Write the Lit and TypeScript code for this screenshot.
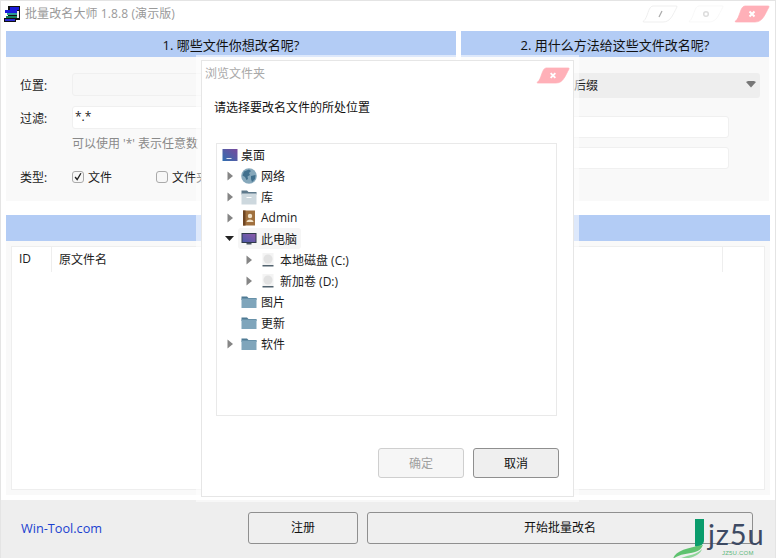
import { LitElement, html, css, svg } from "lit";
import { customElement } from "lit/decorators.js";

const arrowR = html`<svg class="arrow" width="7" height="10" viewBox="0 0 7 10"><polygon points="0.5,0.5 6,5 0.5,9.5" fill="#858585"/></svg>`;
const arrowD = html`<svg class="arrow down" width="9" height="5" viewBox="0 0 9 5"><polygon points="0,0 9,0 4.5,5" fill="#222"/></svg>`;

const icons: Record<string, unknown> = {
  desktop: html`<svg class="ico" viewBox="0 0 16 14"><defs><linearGradient id="dg" x1="0" y1="1" x2="1" y2="0"><stop offset="0" stop-color="#2f6fb0"/><stop offset="1" stop-color="#7a4a9c"/></linearGradient></defs><rect x="0.5" y="1" width="15" height="12" fill="url(#dg)"/><rect x="4.5" y="10" width="5" height="1" fill="#dfe6f0"/></svg>`,
  globe: html`<svg class="ico" viewBox="0 0 16 16"><circle cx="8" cy="8" r="7.8" fill="#86a8bb"/><path d="M3 3.5 L8 1.5 L10 3 L8 5 L9 7 L6.5 8.5 L7 11 L5.5 12 L4 9 L1.5 7.5 Z M10 8 L14.5 7 L14 11 L11 14 L10 11 Z" fill="#41708d"/></svg>`,
  lib: html`<svg class="ico" viewBox="0 0 16 16"><path d="M0.5 1.5 H6 L7.5 3 H15.5 V5.5 H0.5 Z" fill="#5f7a8c"/><rect x="0.5" y="4.5" width="15" height="11" fill="#cdd8de"/><rect x="5.5" y="8" width="5" height="1" fill="#fff"/></svg>`,
  admin: html`<svg class="ico" viewBox="0 0 16 16"><rect x="2" y="0.5" width="12" height="15" fill="#a0703e"/><rect x="2" y="0.5" width="2.5" height="15" fill="#6e4522"/><circle cx="9" cy="6" r="2.2" fill="#f1e2c8"/><path d="M5.5 12 C5.5 8.5 12.5 8.5 12.5 12 Z" fill="#f1e2c8"/></svg>`,
  pc: html`<svg class="ico" viewBox="0 0 16 14"><defs><linearGradient id="pg" x1="0" y1="1" x2="1" y2="0"><stop offset="0" stop-color="#4a58a8"/><stop offset="1" stop-color="#8d5aa8"/></linearGradient></defs><rect x="0.5" y="1" width="15" height="10" fill="#2f3a4a"/><rect x="1.5" y="2" width="13" height="8" fill="url(#pg)"/><rect x="5.5" y="11" width="5" height="1.5" fill="#4a5666"/></svg>`,
  disk: html`<svg class="ico" viewBox="0 0 16 16"><rect x="2.5" y="1" width="11" height="12" fill="#f4f4f4"/><circle cx="8" cy="7" r="4.5" fill="#e2e2e2"/><rect x="2.5" y="13" width="11" height="1.5" fill="#52636f"/></svg>`,
  folder: html`<svg class="ico" viewBox="0 0 16 14"><path d="M0.5 1.5 H6 L7.5 3 H15.5 V5 H0.5 Z" fill="#4f7a94"/><rect x="0.5" y="3.5" width="15" height="9.5" fill="#7fa5bb"/></svg>`,
};

const tree: { lvl: number; arrow?: "r" | "d"; icon: string; label: string; sel?: boolean }[] = [
  { lvl: 0, icon: "desktop", label: "桌面" },
  { lvl: 1, arrow: "r", icon: "globe", label: "网络" },
  { lvl: 1, arrow: "r", icon: "lib", label: "库" },
  { lvl: 1, arrow: "r", icon: "admin", label: "Admin" },
  { lvl: 1, arrow: "d", icon: "pc", label: "此电脑", sel: true },
  { lvl: 2, arrow: "r", icon: "disk", label: "本地磁盘 (C:)" },
  { lvl: 2, arrow: "r", icon: "disk", label: "新加卷 (D:)" },
  { lvl: 1, icon: "folder", label: "图片" },
  { lvl: 1, icon: "folder", label: "更新" },
  { lvl: 1, arrow: "r", icon: "folder", label: "软件" },
];

const winBtn = (fill: string, stroke: string, mark: unknown) => html`<svg class="wbtn" viewBox="0 0 36 18">
  <path d="M11 1 H34 Q35.5 1 35 2 C31 9 29 17 21 17 H2 Q0.5 17 1.5 16 C6 13 6 1 11 1 Z" fill="${fill}" stroke="${stroke}" stroke-width="0.7"/>${mark}</svg>`;
const closeMark = svg`<path d="M15.5 6.5 L20.5 11.5 M20.5 6.5 L15.5 11.5" stroke="#fff" stroke-width="2"/>`;

@customElement("app-root")
export class AppRoot extends LitElement {
  static styles = css`
    :host { display: block; width: 776px; height: 558px; font-family: "Open Sans", "Noto Sans CJK SC", sans-serif; font-size: 12px; color: #1c1c1c; }
    * { box-sizing: border-box; }
    .win { position: relative; width: 776px; height: 558px; background: #fff; border: 1px solid #e4e4e4; border-bottom: 0; display: flex; flex-direction: column; overflow: hidden; }
    .titlebar { height: 30px; flex: none; display: flex; align-items: center; padding: 0 5px 5px 3px; gap: 5px; color: #9a9a9a; }
    .titlebar .title { flex: 1; letter-spacing: 0.1px; margin-top: -2px; }
    .wbtns { display: flex; gap: 10px; align-items: center; }
    .wbtn { width: 36px; height: 18px; display: block; }
    .content { padding: 0 5px; flex: 1; display: flex; flex-direction: column; }
    .cols { display: grid; grid-template-columns: 450px 308px; column-gap: 5px; }
    .head { height: 26px; background: #b3ccf5; display: flex; align-items: center; justify-content: center; font-size: 13px; color: #111; }
    .panel { height: 144px; background: #f9f9f9; padding: 16px 0 0 14px; }
    .form { display: grid; grid-template-columns: 52px 1fr; row-gap: 10px; align-items: center; }
    .lbl { padding-top: 1px; }
    .lbl.t { margin-top: 5px; padding-top: 0; }
    .field { height: 23px; background: #fff; border: 1px solid #f0f0f0; border-radius: 3px; padding: 0 2px 2px; display: flex; align-items: center; }
    .field.off { background: #f8f8f8; }
    .hint { color: #8a8a8a; margin-top: -4px; height: 18px; line-height: 18px; white-space: nowrap; }
    .types { display: flex; margin-top: 5px; }
    .check { display: flex; align-items: center; gap: 4px; width: 84px; }
    .box { width: 12px; height: 12px; border: 1px solid #aaa; border-radius: 3px; background: #f7f7f7; display: block; flex: none; }
    .panel.right { position: relative; padding: 16px 9px 0 49px; }
    .select { height: 25px; background: #eee; border-radius: 3px; display: flex; align-items: center; padding: 0 4px 2px 64px; justify-content: space-between; }
    .rfields { display: flex; flex-direction: column; gap: 9px; margin: 18px 31px 0 0; }
    .rfields .field { height: 22px; }
    .gap { height: 14px; flex: none; }
    .listpanel { flex: 1; background: #f9f9f9; padding: 5px 5px 5px; display: flex; }
    .table { flex: 1; background: #fff; border: 1px solid #eee; }
    .thead { height: 25px; display: grid; grid-template-columns: 40px 1fr 41px; align-items: stretch; }
    .th { display: flex; align-items: center; padding: 0 0 2px 7px; border-right: 1px solid #eee; }
    .th:last-child { border-right: 0; }
    .bottom { height: 58px; flex: none; margin-top: 5px; background: #eeeeee; display: flex; align-items: center; padding: 0 22px 3px 20px; }
    .link { color: #1a3fd0; font-size: 12.7px; width: 227px; font-family: "Open Sans", sans-serif; }
    .btn { height: 32px; background: #efefef; border: 1px solid #8f8f8f; border-bottom-width: 1.5px; border-radius: 3px; display: flex; align-items: center; justify-content: center; color: #111; padding-bottom: 1px; }
    .b1 { width: 110px; margin-right: 9px; }
    .b2 { width: 386px; }
    .mark { position: absolute; left: 672px; top: 515px; width: 100px; height: 43px; pointer-events: none; }
    .mark svg { position: absolute; left: 0; top: 0; }
    .mark .jz { position: absolute; left: 35px; top: -1px; font: 400 29px/38px "Lato", sans-serif; color: #3d4a63; letter-spacing: 0.9px; }
    .mark .sub { position: absolute; left: 49px; top: 34px; font: 400 6px/7px "Liberation Sans", sans-serif; color: #5cb87a; letter-spacing: 0.2px; }
    .dialog { position: absolute; left: 200px; top: 59px; width: 373px; height: 437px; background: #fff; border: 1px solid #e6e6e6; box-shadow: 0 0 0 5px rgba(255,255,255,0.55); display: flex; flex-direction: column; padding: 0 14px 0 12px; }
    .dlg-title { height: 27px; margin: 0 -14px 0 -9px; flex: none; display: flex; align-items: center; justify-content: space-between; padding: 0 3px 3px 0; color: #a9a9a9; }
    .dlg-title .wbtn { width: 34px; height: 17px; margin-top: 4px; }
    .prompt { margin-top: 11px; height: 18px; line-height: 18px; color: #111; }
    .treebox { margin: 26px 0 0 2px; width: 341px; height: 273px; border: 1px solid #e9e9e9; }
    .row { height: 21px; display: flex; align-items: center; color: #1c1c1c; }
    .lvl0 { padding-left: 5px; }
    .lvl1 { padding-left: 10px; }
    .lvl2 { padding-left: 29px; }
    .slot { width: 11px; flex: none; display: flex; align-items: center; }
    .arrow { display: block; flex: none; }
    .arrow.down { margin-left: -2px; }
    .item { height: 21px; display: flex; align-items: center; gap: 4px; padding: 0 4px 0 3px; border-radius: 3px; }
    .item.sel { background: #f6f6f6; }
    .lvl0 .item { padding-left: 0; gap: 3px; }
    .ico { width: 16px; height: 16px; display: block; flex: none; }
    .dlg-actions { display: flex; gap: 9px; margin: 32px 0 0 164px; }
    .dbtn { width: 86px; height: 30px; border-radius: 3px; display: flex; align-items: center; justify-content: center; background: #efefef; border: 1px solid #8f8f8f; border-bottom-width: 1.5px; color: #111; }
    .dbtn.off { background: #f6f6f6; border-color: #cfcfcf; color: #a0a0a0; }
  `;

  render() {
    return html`<div class="win">
      <div class="titlebar">
        <svg width="16" height="16" viewBox="0 0 16 16">
          <rect x="0" y="12" width="12" height="4" fill="#111"/>
          <rect x="4" y="0" width="12" height="14" fill="#111"/>
          <rect x="6" y="1" width="9" height="3" fill="#1b1bd8"/>
          <rect x="1" y="4" width="12" height="3" fill="#1b1bd8"/>
          <rect x="3" y="7" width="10" height="2" fill="#2a9a96"/>
          <rect x="2" y="10" width="11" height="2" fill="#16805a"/>
          <rect x="1" y="13" width="10" height="2" fill="#2b2bd0"/>
          <rect x="13" y="5" width="2" height="7" fill="#eee"/>
        </svg>
        <span class="title">批量改名大师 1.8.8 (演示版)</span>
        <div class="wbtns">
          ${winBtn("#fff", "#e8e8e8", svg`<path d="M20 6 L17 12" stroke="#aaa" stroke-width="1.2"/>`)}
          ${winBtn("#fff", "#f5f5f5", svg`<circle cx="18" cy="9" r="2.3" fill="none" stroke="#ddd" stroke-width="1.5"/>`)}
          ${winBtn("#ffb0b8", "#ffb0b8", closeMark)}
        </div>
      </div>
      <div class="content">
        <div class="cols">
          <div>
            <div class="head">1. 哪些文件你想改名呢?</div>
            <div class="panel">
              <div class="form">
                <span class="lbl">位置:</span><div class="field off"></div>
                <span class="lbl">过滤:</span><div class="field">*.*</div>
                <span></span><div class="hint">可以使用 '*' 表示任意数</div>
                <span class="lbl t">类型:</span>
                <div class="types">
                  <label class="check"><svg class="box" viewBox="0 0 12 12"><path d="M2.5 6 L5 9 L9.5 1.5" fill="none" stroke="#222" stroke-width="1.6"/></svg>文件</label>
                  <label class="check"><span class="box"></span>文件夹</label>
                </div>
              </div>
            </div>
          </div>
          <div>
            <div class="head">2. 用什么方法给这些文件改名呢?</div>
            <div class="panel right">
              <div class="select"><span>后缀</span>
                <svg width="10" height="7" viewBox="0 0 10 7"><polygon points="0,1 2,0 8,0 10,1 5,6.5" fill="#777"/></svg>
              </div>
              <div class="rfields"><div class="field"></div><div class="field"></div></div>
            </div>
          </div>
        </div>
        <div class="gap"></div>
        <div class="head"></div>
        <div class="listpanel">
          <div class="table">
            <div class="thead">
              <div class="th">ID</div><div class="th">原文件名</div><div class="th"></div>
            </div>
          </div>
        </div>
      </div>
      <div class="bottom">
        <span class="link">Win-Tool.com</span>
        <div class="btn b1">注册</div>
        <div class="btn b2">开始批量改名</div>
      </div>

      <div class="dialog">
        <div class="dlg-title"><span>浏览文件夹</span>${winBtn("#ffb0b8", "#ffb0b8", closeMark)}</div>
        <div class="prompt">请选择要改名文件的所处位置</div>
        <div class="treebox">
          ${tree.map(
            (r) => html`<div class="row lvl${r.lvl}">
              ${r.lvl > 0
                ? html`<span class="slot">${r.arrow === "r" ? arrowR : r.arrow === "d" ? arrowD : ""}</span>`
                : ""}
              <span class="item ${r.sel ? "sel" : ""}">${icons[r.icon]}<span>${r.label}</span></span>
            </div>`
          )}
        </div>
        <div class="dlg-actions">
          <div class="dbtn off">确定</div>
          <div class="dbtn">取消</div>
        </div>
      </div>

      <div class="mark">
        <svg width="40" height="43" viewBox="0 0 40 43">
          <path d="M22 3 H31 V24 C31 28 28 30 23 31 L22 30 Z" fill="#0a9c6c"/>
          <path d="M0 43 C2 35 14 32 30 29 C28 33 26 35 22 36 C14 38 6 38 0 43 Z" fill="#5ec26f"/>
          <path d="M6 43 C14 39 24 39 29 33 C27 40 16 43 6 43 Z" fill="#8ed69a"/>
        </svg>
        <span class="jz">jz5u</span>
        <span class="sub">JZ5U.COM</span>
      </div>
    </div>`;
  }
}
